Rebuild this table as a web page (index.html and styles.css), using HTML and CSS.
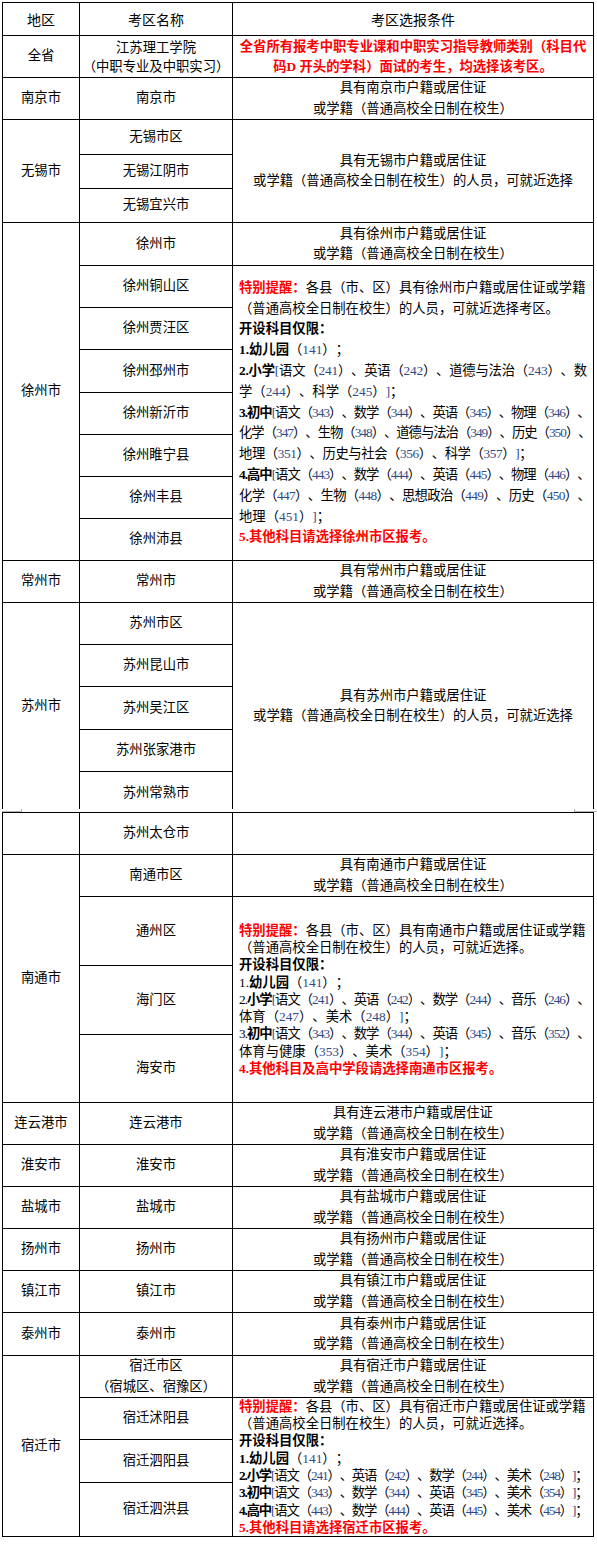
FILE: index.html
```html
<!DOCTYPE html>
<html lang="zh-CN">
<head>
<meta charset="utf-8">
<title>考区选报条件</title>
<link rel="stylesheet" href="styles.css">
</head>
<body>
<div class="page">
  <div class="grid grid-a">
    <div class="cell c1 head">地区</div>
    <div class="cell c2 head">考区名称</div>
    <div class="cell c3 head">考区选报条件</div>

    <div class="cell c1">全省</div>
    <div class="cell c2 lh19">江苏理工学院<br>（中职专业及中职实习）</div>
    <div class="cell c3 alert">全省所有报考中职专业课和中职实习指导教师类别（科目代<br>码D 开头的学科）面试的考生，均选择该考区。</div>

    <div class="cell c1">南京市</div>
    <div class="cell c2">南京市</div>
    <div class="cell c3">具有南京市户籍或居住证<br>或学籍（普通高校全日制在校生）</div>

    <div class="cell c1 span3">无锡市</div>
    <div class="cell c2">无锡市区</div>
    <div class="cell c3 span3">具有无锡市户籍或居住证<br>或学籍（普通高校全日制在校生）的人员，可就近选择</div>
    <div class="cell c2">无锡江阴市</div>
    <div class="cell c2">无锡宜兴市</div>

    <div class="cell c1 span8">徐州市</div>
    <div class="cell c2">徐州市</div>
    <div class="cell c3">具有徐州市户籍或居住证<br>或学籍（普通高校全日制在校生）</div>
    <div class="cell c2">徐州铜山区</div>
    <div class="cell c3 span7 note lh21">
      <div class="lines">
        <div class="ln"><span class="red">特别提醒：</span>各县（市、区）具有徐州市户籍或居住证或学籍</div>
        <div class="ln">（普通高校全日制在校生）的人员，可就近选择考区。</div>
        <div class="ln"><b>开设科目仅限：</b></div>
        <div class="ln"><b>1.幼儿园</b>（<span class="n">141</span>）；</div>
        <div class="ln t1"><b>2.小学</b><span class="n">[</span>语文（<span class="n">241</span>）、英语（<span class="n">242</span>）、道德与法治（<span class="n">243</span>）、数</div>
        <div class="ln">学（<span class="n">244</span>）、科学（<span class="n">245</span>）<span class="n">]</span>；</div>
        <div class="ln t4"><b>3.初中</b><span class="n">[</span>语文（<span class="n">343</span>）、数学（<span class="n">344</span>）、英语（<span class="n">345</span>）、物理（<span class="n">346</span>）、</div>
        <div class="ln t4">化学（<span class="n">347</span>）、生物（<span class="n">348</span>）、道德与法治（<span class="n">349</span>）、历史（<span class="n">350</span>）、</div>
        <div class="ln t2">地理（<span class="n">351</span>）、历史与社会（<span class="n">356</span>）、科学（<span class="n">357</span>）<span class="n">]</span>；</div>
        <div class="ln t4"><b>4.高中</b><span class="n">[</span>语文（<span class="n">443</span>）、数学（<span class="n">444</span>）、英语（<span class="n">445</span>）、物理（<span class="n">446</span>）、</div>
        <div class="ln t3">化学（<span class="n">447</span>）、生物（<span class="n">448</span>）、思想政治（<span class="n">449</span>）、历史（<span class="n">450</span>）、</div>
        <div class="ln">地理（<span class="n">451</span>）<span class="n">]</span>；</div>
        <div class="ln red">5.其他科目请选择徐州市区报考。</div>
      </div>
    </div>
    <div class="cell c2">徐州贾汪区</div>
    <div class="cell c2">徐州邳州市</div>
    <div class="cell c2">徐州新沂市</div>
    <div class="cell c2">徐州睢宁县</div>
    <div class="cell c2">徐州丰县</div>
    <div class="cell c2">徐州沛县</div>

    <div class="cell c1">常州市</div>
    <div class="cell c2">常州市</div>
    <div class="cell c3">具有常州市户籍或居住证<br>或学籍（普通高校全日制在校生）</div>

    <div class="cell c1 span5 open">苏州市</div>
    <div class="cell c2">苏州市区</div>
    <div class="cell c3 span5 open">具有苏州市户籍或居住证<br>或学籍（普通高校全日制在校生）的人员，可就近选择</div>
    <div class="cell c2">苏州昆山市</div>
    <div class="cell c2">苏州吴江区</div>
    <div class="cell c2">苏州张家港市</div>
    <div class="cell c2 open cut">苏州常熟市</div>
  </div>

  <div class="break"><span class="mark-l"></span><span class="mark-r"></span></div>

  <div class="grid grid-b">
    <div class="cell c1"></div>
    <div class="cell c2">苏州太仓市</div>
    <div class="cell c3"></div>

    <div class="cell c1 span4">南通市</div>
    <div class="cell c2">南通市区</div>
    <div class="cell c3">具有南通市户籍或居住证<br>或学籍（普通高校全日制在校生）</div>
    <div class="cell c2">通州区</div>
    <div class="cell c3 span3 note lh17">
      <div class="lines">
        <div class="ln"><span class="red">特别提醒：</span>各县（市、区）具有南通市户籍或居住证或学籍</div>
        <div class="ln">（普通高校全日制在校生）的人员，可就近选择。</div>
        <div class="ln"><b>开设科目仅限：</b></div>
        <div class="ln">1.<b>幼儿园</b>（<span class="n">141</span>）；</div>
        <div class="ln t4">2.<b>小学</b><span class="n">[</span>语文（<span class="n">241</span>）、英语（<span class="n">242</span>）、数学（<span class="n">244</span>）、音乐（<span class="n">246</span>）、</div>
        <div class="ln">体育（<span class="n">247</span>）、美术（<span class="n">248</span>）<span class="n">]</span>；</div>
        <div class="ln t4">3.<b>初中</b><span class="n">[</span>语文（<span class="n">343</span>）、数学（<span class="n">344</span>）、英语（<span class="n">345</span>）、音乐（<span class="n">352</span>）、</div>
        <div class="ln">体育与健康（<span class="n">353</span>）、美术（<span class="n">354</span>）<span class="n">]</span>；</div>
        <div class="ln red">4.其他科目及高中学段请选择南通市区报考。</div>
      </div>
    </div>
    <div class="cell c2">海门区</div>
    <div class="cell c2">海安市</div>

    <div class="cell c1">连云港市</div>
    <div class="cell c2">连云港市</div>
    <div class="cell c3">具有连云港市户籍或居住证<br>或学籍（普通高校全日制在校生）</div>

    <div class="cell c1">淮安市</div>
    <div class="cell c2">淮安市</div>
    <div class="cell c3">具有淮安市户籍或居住证<br>或学籍（普通高校全日制在校生）</div>

    <div class="cell c1">盐城市</div>
    <div class="cell c2">盐城市</div>
    <div class="cell c3">具有盐城市户籍或居住证<br>或学籍（普通高校全日制在校生）</div>

    <div class="cell c1">扬州市</div>
    <div class="cell c2">扬州市</div>
    <div class="cell c3">具有扬州市户籍或居住证<br>或学籍（普通高校全日制在校生）</div>

    <div class="cell c1">镇江市</div>
    <div class="cell c2">镇江市</div>
    <div class="cell c3">具有镇江市户籍或居住证<br>或学籍（普通高校全日制在校生）</div>

    <div class="cell c1">泰州市</div>
    <div class="cell c2">泰州市</div>
    <div class="cell c3">具有泰州市户籍或居住证<br>或学籍（普通高校全日制在校生）</div>

    <div class="cell c1 span4">宿迁市</div>
    <div class="cell c2">宿迁市区<br>（宿城区、宿豫区）</div>
    <div class="cell c3">具有宿迁市户籍或居住证<br>或学籍（普通高校全日制在校生）</div>
    <div class="cell c2">宿迁沭阳县</div>
    <div class="cell c3 span3 note lh17">
      <div class="lines">
        <div class="ln"><span class="red">特别提醒：</span>各县（市、区）具有宿迁市户籍或居住证或学籍</div>
        <div class="ln">（普通高校全日制在校生）的人员，可就近选择。</div>
        <div class="ln"><b>开设科目仅限：</b></div>
        <div class="ln"><b>1.幼儿园</b>（<span class="n">141</span>）；</div>
        <div class="ln t5"><b>2.小学</b><span class="n">[</span>语文（<span class="n">241</span>）、英语（<span class="n">242</span>）、数学（<span class="n">244</span>）、美术（<span class="n">248</span>）<span class="n">]</span>；</div>
        <div class="ln t5"><b>3.初中</b><span class="n">[</span>语文（<span class="n">343</span>）、数学（<span class="n">344</span>）、英语（<span class="n">345</span>）、美术（<span class="n">354</span>）<span class="n">]</span>；</div>
        <div class="ln t5"><b>4.高中</b><span class="n">[</span>语文（<span class="n">443</span>）、数学（<span class="n">444</span>）、英语（<span class="n">445</span>）、美术（<span class="n">454</span>）<span class="n">]</span>；</div>
        <div class="ln red">5.其他科目请选择宿迁市区报考。</div>
      </div>
    </div>
    <div class="cell c2">宿迁泗阳县</div>
    <div class="cell c2">宿迁泗洪县</div>
  </div>
</div>
</body>
</html>
```

FILE: styles.css
```css
* {
  box-sizing: border-box;
}

body {
  margin: 0;
  background: #ffffff;
  color: #000000;
  font-family: "Liberation Serif", "Noto Sans CJK SC", serif;
  font-size: 13.33px;
  text-spacing-trim: space-all;
}

.page {
  padding: 2px 0 0 2px;
}

.grid {
  display: grid;
  grid-template-columns: 77px 153px 361px;
  width: 592px;
  border-left: 1px solid #000;
  border-top: 1px solid #000;
}

.grid-a {
  grid-template-rows: 33px 42px 42px 35px 34px 34px 43px 42px 42px 43px 42px 42px 42px 42px 42px 42px 42px 43px 42px 37px;
}

.grid-b {
  grid-template-rows: 42px 42px 69px 69px 68px 42px 42px 42px 42px 42px 43px 42px 42px 43px 54px;
}

.cell {
  display: flex;
  align-items: center;
  justify-content: center;
  text-align: center;
  min-width: 0;
  border-right: 1px solid #000;
  border-bottom: 1px solid #000;
  line-height: 20.5px;
}

.c1 { grid-column: 1; }
.c2 { grid-column: 2; }
.c3 { grid-column: 3; }

.span3 { grid-row: span 3; }
.span4 { grid-row: span 4; }
.span5 { grid-row: span 5; }
.span7 { grid-row: span 7; }
.span8 { grid-row: span 8; }

.head {
  font-family: "Noto Sans CJK SC", sans-serif;
  font-size: 14px;
}

.lh19 {
  line-height: 19px;
}

.alert {
  color: #ff0000;
  font-weight: bold;
  line-height: 20px;
}

.note {
  justify-content: flex-start;
  text-align: left;
  padding-left: 6px;
}

.lh21 { line-height: 20.8px; }
.lh17 { line-height: 17.3px; }

.ln {
  white-space: nowrap;
}

.t1 { letter-spacing: -0.2px; }
.t2 { letter-spacing: -0.4px; }
.t3 { letter-spacing: -0.65px; }
.t4 { letter-spacing: -1px; }
.t5 { letter-spacing: -1.15px; }

b {
  font-weight: bold;
}

.red {
  color: #ff0000;
  font-weight: bold;
}

.n {
  color: #2f4a86;
}

.open {
  border-bottom: none;
}

.cut {
  padding-top: 5px;
}

.break {
  display: flex;
  justify-content: space-between;
  width: 595px;
  height: 3px;
}

.mark-l {
  width: 20px;
  height: 3px;
  border-bottom: 1px solid #b4b4b4;
  border-right: 1px solid #b4b4b4;
}

.mark-r {
  width: 23px;
  height: 3px;
  border-bottom: 1px solid #b4b4b4;
  border-left: 1px solid #b4b4b4;
}
```
